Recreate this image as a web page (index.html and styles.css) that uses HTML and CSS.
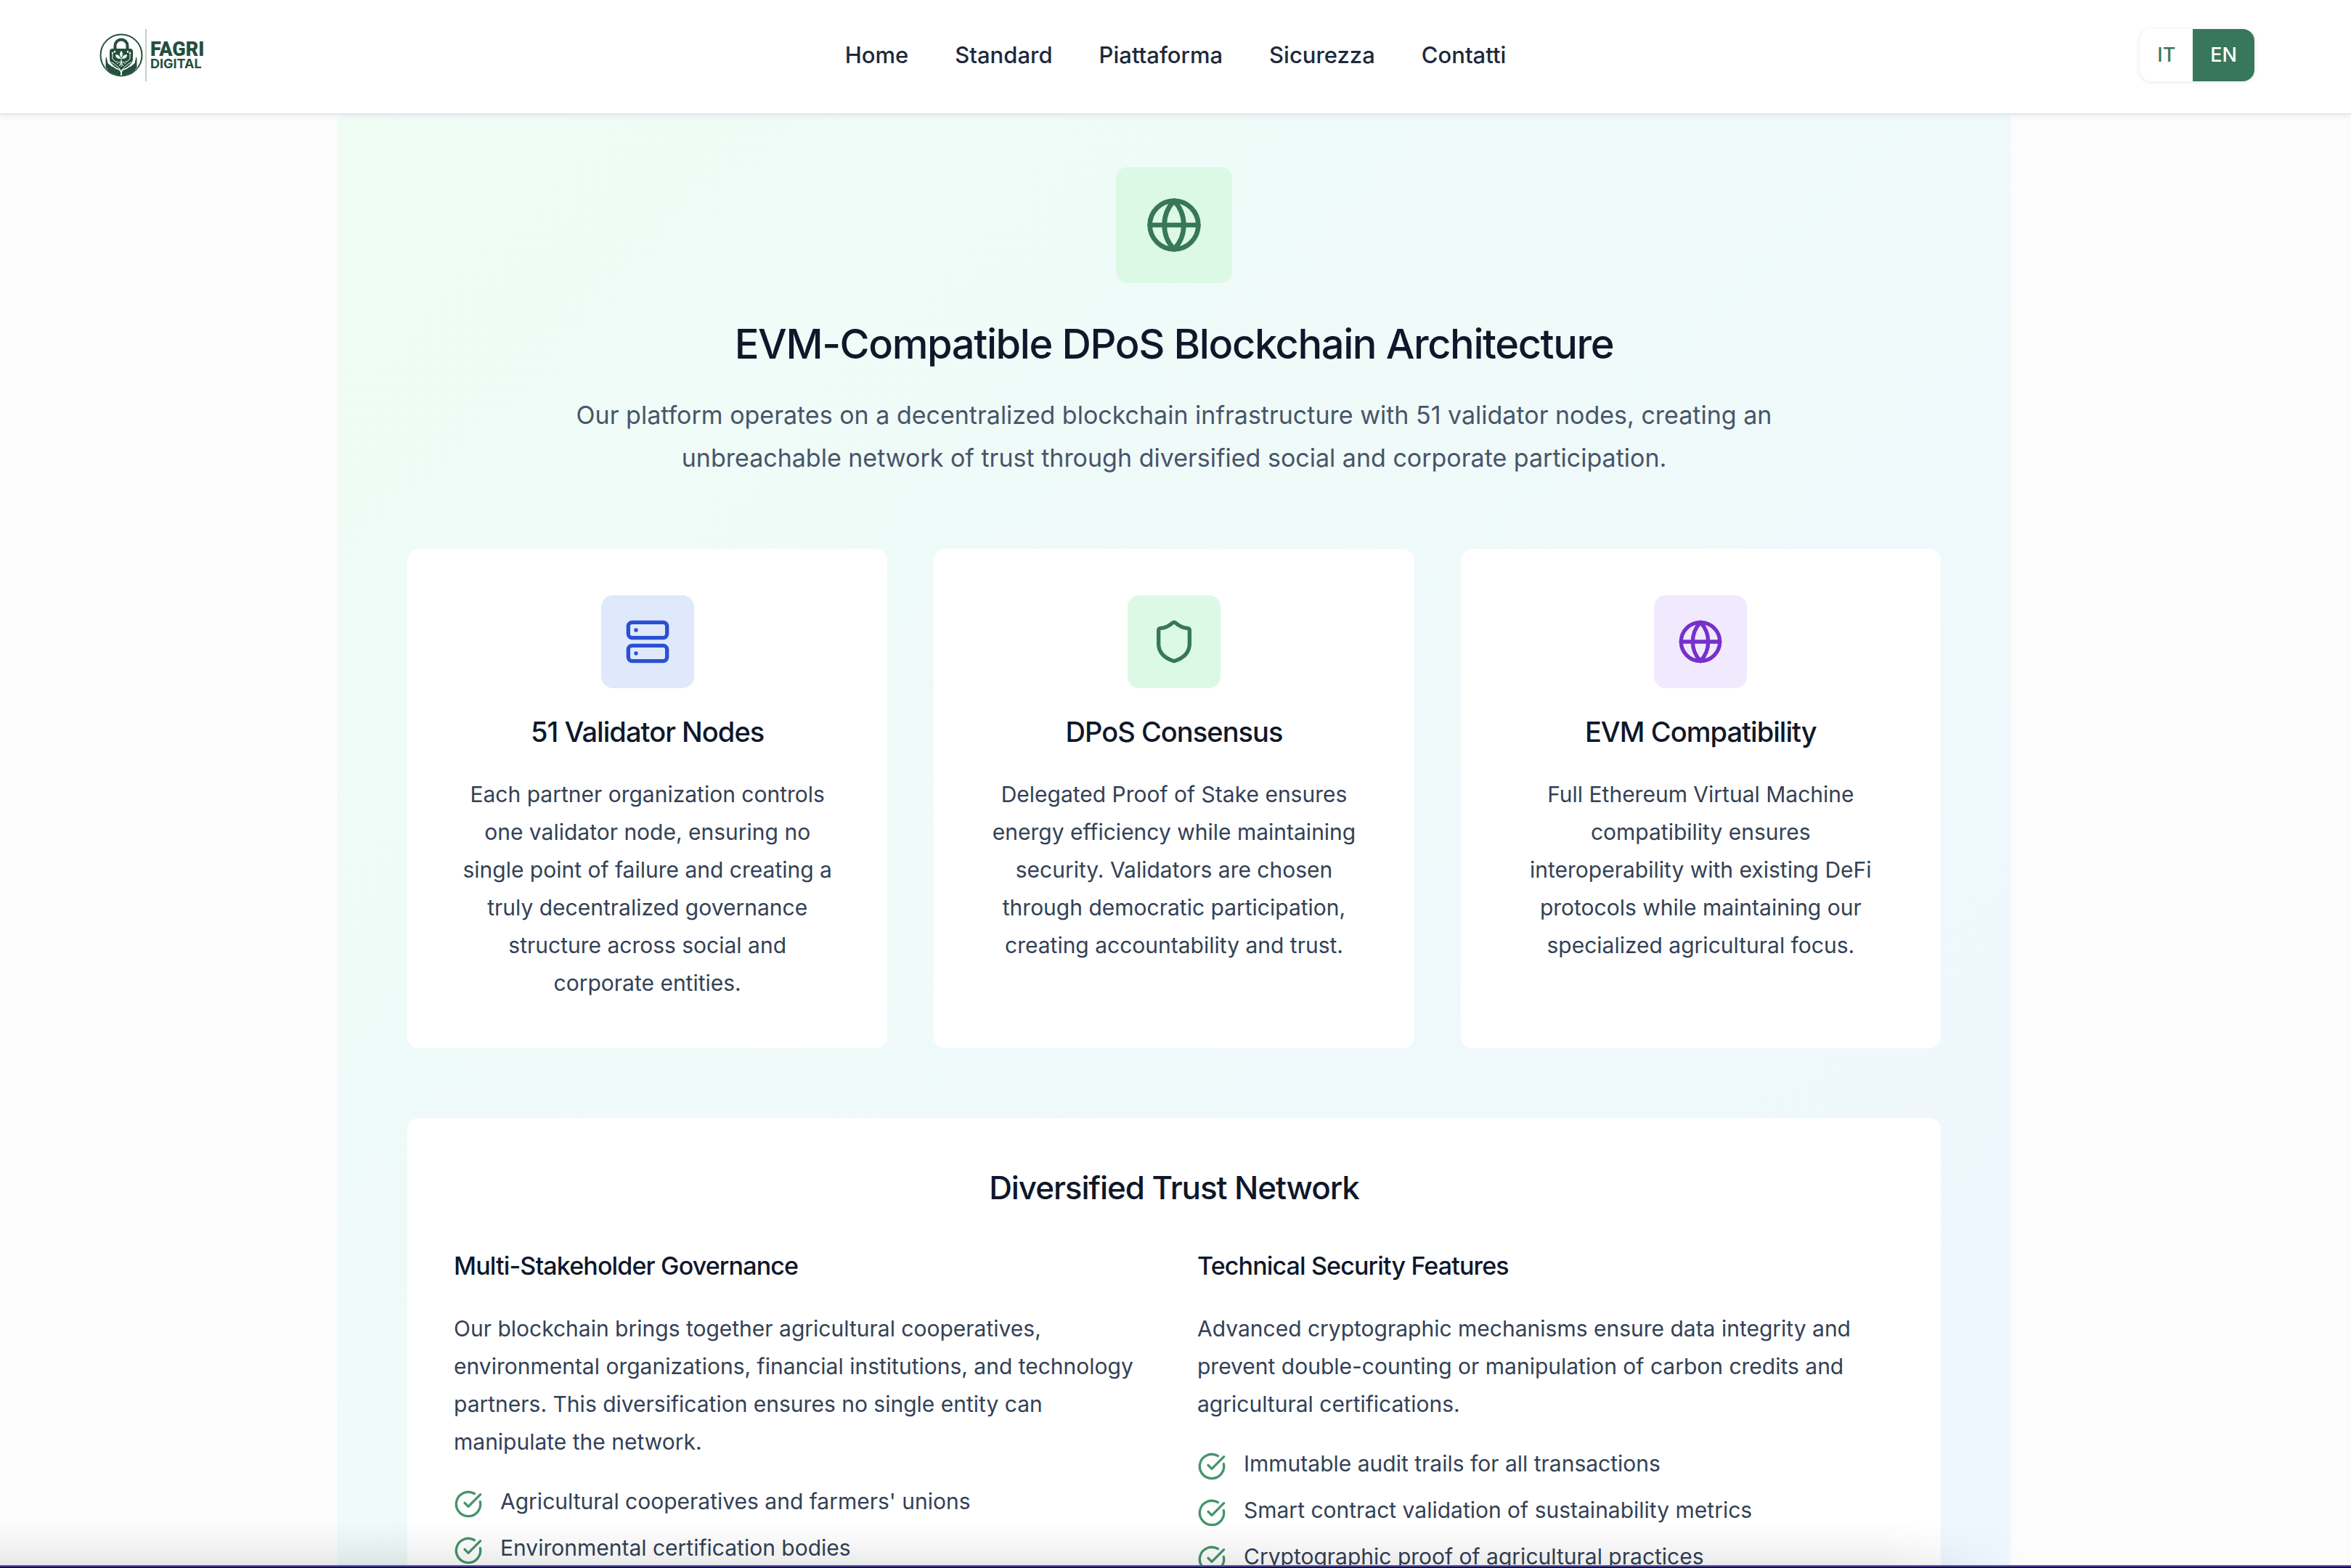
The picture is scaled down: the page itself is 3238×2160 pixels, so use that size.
FILE: index.html
```html
<!DOCTYPE html>
<html lang="en">
<head>
<meta charset="utf-8">
<title>Fagri Digital</title>
<link rel="stylesheet" href="styles.css">
</head>
<body>
<svg class="sprite" aria-hidden="true">
  <symbol id="globe" viewBox="0 0 24 24"><circle cx="12" cy="12" r="10"/><path d="M12 2a14.5 14.5 0 0 0 0 20 14.5 14.5 0 0 0 0-20"/><path d="M2 12h20"/></symbol>
  <symbol id="server" viewBox="0 0 24 24"><rect width="20" height="8" x="2" y="2" rx="2"/><rect width="20" height="8" x="2" y="14" rx="2"/><path d="M6 6h.01M6 18h.01"/></symbol>
  <symbol id="shield" viewBox="0 0 24 24"><path d="M20 13c0 5-3.5 7.500-7.660 8.950a1 1 0 0 1-.67-.01C7.500 20.500 4 18 4 13V6a1 1 0 0 1 1-1c2 0 4.500-1.200 6.240-2.720a1.170 1.170 0 0 1 1.520 0C14.510 3.810 17 5 19 5a1 1 0 0 1 1 1z"/></symbol>
  <symbol id="check" viewBox="0 0 24 24"><path d="M21.801 10A10 10 0 1 1 17 3.335"/><path d="m9 11 3 3L22 4"/></symbol>
</svg>

<header class="header">
  <a class="logo" href="#" aria-label="Fagri Digital">
    <svg class="logo-mark" viewBox="0 0 60 60" aria-hidden="true">
      <defs><clipPath id="seal"><circle cx="30" cy="30" r="28"/></clipPath></defs>
      <circle cx="30" cy="30" r="28.500" fill="none" stroke="#24503d" stroke-width="2"/>
      <path d="M21.500 24v-7a8.500 8.500 0 0 1 17 0v7" fill="none" stroke="#24503d" stroke-width="4"/>
      <path d="M18 21h24q4 0 4 4v9q0 7-5 11l-11 7-11-7q-5-4-5-11v-9q0-4 4-4z" fill="#24503d"/>
      <g clip-path="url(#seal)" fill="#24503d" stroke="#fff">
        <path d="M10 32q-2 0-2 3v12q6 9 16 13h6v-5q0-6-6-10l-5-4q-3-2-4 0l3 5-6-5z" stroke-width="1"/>
        <path d="M50 32q2 0 2 3v12q-6 9-16 13h-6v-5q0-6 6-10l5-4q3-2 4 0l-3 5 6-5z" stroke-width="1"/>
        <path d="M30 59v-5M16 42q5 6 9 7t5 5q1-4 5-5t9-7" fill="none" stroke-width="1.500"/>
      </g>
      <path d="M30 24q-4 4 0 9 4-5 0-9zM29 35q-1-6-7-6 0 6 7 6zM31 35q1-6 7-6 0 6-7 6z" fill="#fff"/>
      <path d="M30 30v16M30 39q-3 0-6 3M30 39q3 0 6 3M30 40l-3 5M30 40l3 5M18 27v8l4 4h3M21 25v2M42 27v8l-4 4h-3M39 25v2" fill="none" stroke="#fff" stroke-width="1"/>
      <g fill="#fff"><circle cx="18" cy="27" r="1.200"/><circle cx="21" cy="25" r="1.200"/><circle cx="39" cy="25" r="1.200"/><circle cx="42" cy="27" r="1.200"/></g>
    </svg>
    <span class="logo-text"><span class="logo-name">FAGRI</span><span class="logo-sub">DIGITAL</span></span>
  </a>
  <nav class="nav">
    <a href="#">Home</a>
    <a href="#">Standard</a>
    <a href="#">Piattaforma</a>
    <a href="#">Sicurezza</a>
    <a href="#">Contatti</a>
  </nav>
  <div class="lang">
    <button type="button">IT</button>
    <button type="button" class="active">EN</button>
  </div>
</header>

<main class="main">
  <section class="architecture">
    <div class="intro">
      <span class="tile tile-large green"><svg class="icon"><use href="#globe"/></svg></span>
      <h2>EVM-Compatible DPoS Blockchain Architecture</h2>
      <p>Our platform operates on a decentralized blockchain infrastructure with 51 validator nodes, creating an unbreachable network of trust through diversified social and corporate participation.</p>
    </div>

    <div class="cards">
      <article class="card">
        <span class="tile blue"><svg class="icon"><use href="#server"/></svg></span>
        <h3>51 Validator Nodes</h3>
        <p>Each partner organization controls one validator node, ensuring no single point of failure and creating a truly decentralized governance structure across social and corporate entities.</p>
      </article>
      <article class="card">
        <span class="tile green"><svg class="icon"><use href="#shield"/></svg></span>
        <h3>DPoS Consensus</h3>
        <p>Delegated Proof of Stake ensures energy efficiency while maintaining security. Validators are chosen through democratic participation, creating accountability and trust.</p>
      </article>
      <article class="card">
        <span class="tile purple"><svg class="icon"><use href="#globe"/></svg></span>
        <h3>EVM Compatibility</h3>
        <p>Full Ethereum Virtual Machine compatibility ensures interoperability with existing DeFi protocols while maintaining our specialized agricultural focus.</p>
      </article>
    </div>

    <div class="trust">
      <h3>Diversified Trust Network</h3>
      <div class="columns">
        <div>
          <h4>Multi-Stakeholder Governance</h4>
          <p>Our blockchain brings together agricultural cooperatives, environmental organizations, financial institutions, and technology partners. This diversification ensures no single entity can manipulate the network.</p>
          <ul>
            <li><svg class="icon"><use href="#check"/></svg>Agricultural cooperatives and farmers' unions</li>
            <li><svg class="icon"><use href="#check"/></svg>Environmental certification bodies</li>
          </ul>
        </div>
        <div>
          <h4>Technical Security Features</h4>
          <p>Advanced cryptographic mechanisms ensure data integrity and prevent double-counting or manipulation of carbon credits and agricultural certifications.</p>
          <ul>
            <li><svg class="icon"><use href="#check"/></svg>Immutable audit trails for all transactions</li>
            <li><svg class="icon"><use href="#check"/></svg>Smart contract validation of sustainability metrics</li>
            <li><svg class="icon"><use href="#check"/></svg>Cryptographic proof of agricultural practices</li>
          </ul>
        </div>
      </div>
    </div>
  </section>
</main>
<div class="dock"></div>
</body>
</html>
```
FILE: styles.css
```css
* { box-sizing: border-box; margin: 0; padding: 0; }

body {
  height: 100vh;
  overflow: hidden;
  display: flex;
  flex-direction: column;
  background: #fcfcfc;
  color: #334155;
  font: 400 30px/52px Inter, "Liberation Sans", sans-serif;
}

.sprite { position: absolute; width: 0; height: 0; }
.icon { display: block; fill: none; stroke: currentColor; stroke-width: 2; stroke-linecap: round; stroke-linejoin: round; }

.header {
  position: relative;
  z-index: 2;
  flex: none;
  display: grid;
  grid-template-columns: 1fr auto 1fr;
  align-items: center;
  padding: 40px 133px 44px;
  background: #fff;
  border-bottom: 2px solid #e2e8f0;
  box-shadow: 0 2px 8px rgba(0, 0, 0, .06);
}
.logo { display: flex; align-items: center; justify-self: start; height: 72px; padding-left: 4px; color: #24503d; text-decoration: none; }
.logo-mark { width: 60px; height: 60px; }
.logo-text {
  display: flex;
  flex-direction: column;
  justify-content: center;
  align-self: stretch;
  margin-left: 3px;
  padding-left: 5px;
  border-left: 2px solid #c2cfc9;
}
.logo-name { font: 900 27px/24px Roboto, "Liberation Sans", sans-serif; }
.logo-sub { font-weight: 700; font-size: 18px; line-height: 16px; }

.nav { display: flex; gap: 64px; }
.nav a { color: #1e293b; font-weight: 500; font-size: 31px; line-height: 48px; text-decoration: none; }

.lang { display: flex; justify-self: end; overflow: hidden; border-radius: 16px; box-shadow: 0 1px 6px rgba(0, 0, 0, .1); }
.lang button { height: 72px; padding: 0 24px; border: 0; background: #fff; color: #38775a; font: 500 27px/40px Inter, sans-serif; }
.lang .active { background: #38775a; color: #fff; }

.main { flex: 1; min-height: 0; overflow: hidden; padding-right: 4px; }
.architecture {
  max-width: 2304px;
  margin: 0 auto;
  padding: 72px 96px 200px;
  background: linear-gradient(to bottom right, #effdf5, #eff6ff);
}

h2, h3, h4 { color: #0f172a; font-weight: 500; letter-spacing: -0.025em; }

.intro { display: flex; flex-direction: column; align-items: center; text-align: center; margin-bottom: 96px; }
.intro h2 { margin: 48px 0 32px; font-size: 56px; line-height: 72px; }
.intro p { max-width: 1792px; font-size: 34px; line-height: 59px; color: #475569; }

.tile { display: grid; place-items: center; width: 128px; height: 128px; border-radius: 16px; }
.tile .icon { width: 64px; height: 64px; }
.tile-large { width: 160px; height: 160px; }
.tile-large .icon { width: 80px; height: 80px; }
.green { background: #dcf9e6; color: #38775a; }
.blue { background: #dfe9fb; color: #2b50d4; }
.purple { background: #f1e9fd; color: #7630cb; }

.cards { display: grid; grid-template-columns: repeat(3, 1fr); gap: 64px; margin-bottom: 96px; }
.card { display: flex; flex-direction: column; align-items: center; padding: 64px 72px; border-radius: 16px; background: #fff; text-align: center; }
.card h3 { margin: 32px 0; font-size: 38px; line-height: 56px; }

.trust { padding: 64px; border-radius: 16px; background: #fff; }
.trust h3 { margin-bottom: 48px; font-size: 44px; line-height: 64px; text-align: center; }
.columns { display: grid; grid-template-columns: 1fr 1fr; gap: 64px; }
.columns h4 { margin-bottom: 32px; font-size: 34px; line-height: 56px; }
.columns ul { display: grid; gap: 16px; margin-top: 32px; list-style: none; }
.columns li { display: flex; gap: 24px; line-height: 48px; }
.columns li .icon { flex: none; width: 40px; height: 40px; margin-top: 8px; color: #45946a; }

/* Bar docked to the lower edge, with its shade cast over the page. */
.dock { position: fixed; inset: auto 0 0; z-index: 3; height: 4px; background: #15132a; border-top: 2px solid #5a50c8; }
.dock::before {
  content: "";
  position: absolute;
  inset: auto 14% 100% 0;
  height: 60px;
  margin-bottom: 2px;
  background: linear-gradient(to top, rgba(0, 0, 0, .08), rgba(0, 0, 0, .035) 45%, rgba(0, 0, 0, 0));
  mask-image: linear-gradient(to left, transparent, #000 200px);
}
```
